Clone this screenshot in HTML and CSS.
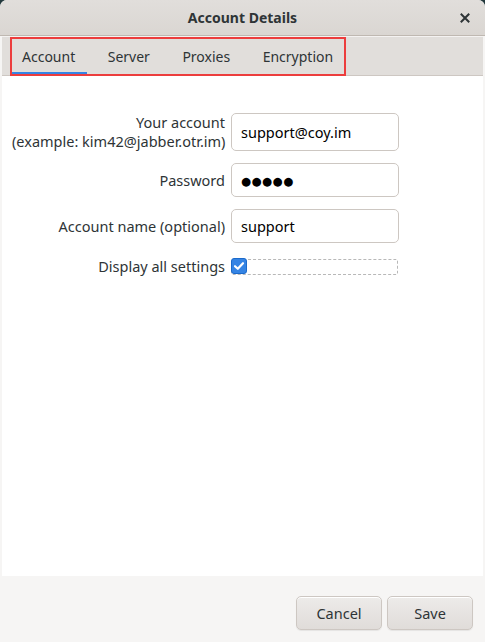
FILE: index.html
```html
<!DOCTYPE html>
<html>
<head>
<meta charset="utf-8">
<link rel="stylesheet" href="styles.css">
</head>
<body>
<div class="window">
  <header class="titlebar">
    <span class="title">Account Details</span>
    <button class="close" aria-label="Close">
      <svg width="10" height="10" viewBox="0 0 10 10"><path d="M1.5 1.5 L8.5 8.5 M8.5 1.5 L1.5 8.5" stroke="#2e3436" stroke-width="2" stroke-linecap="square"/></svg>
    </button>
  </header>
  <div class="notebook">
    <div class="tabstrip">
      <nav class="tabs">
        <span class="tab active">Account</span>
        <span class="tab">Server</span>
        <span class="tab">Proxies</span>
        <span class="tab">Encryption</span>
      </nav>
    </div>
    <main class="page">
      <div class="form">
        <label class="label two">Your account<br>(example: kim42@jabber.otr.im)</label>
        <div class="entry tall">support@coy.im</div>
        <label class="label">Password</label>
        <div class="entry dots">●●●●●</div>
        <label class="label">Account name (optional)</label>
        <div class="entry">support</div>
        <label class="label check-label">Display all settings</label>
        <div class="check-row">
          <span class="checkbox">
            <svg width="12" height="10" viewBox="0 0 12 10"><path d="M2 5.2 L4.8 7.8 L10 2.2" fill="none" stroke="#fff" stroke-width="2.2" stroke-linecap="round" stroke-linejoin="round"/></svg>
          </span>
        </div>
      </div>
    </main>
  </div>
  <footer class="actions">
    <button class="btn">Cancel</button>
    <button class="btn">Save</button>
  </footer>
</div>
</body>
</html>
```
FILE: styles.css
```css
* { box-sizing: border-box; }
html, body {
  margin: 0;
  padding: 0;
  width: 485px;
  height: 642px;
  background: #23393d;
  overflow: hidden;
}
body {
  font-family: "Noto Sans", "DejaVu Sans", sans-serif;
  font-size: 14.5px;
  color: #2e3436;
}
.window {
  width: 485px;
  height: 642px;
  display: flex;
  flex-direction: column;
  background: #f6f5f4;
  border-radius: 7px 7px 0 0;
  overflow: hidden;
}
.titlebar {
  height: 36px;
  flex: none;
  display: flex;
  align-items: center;
  justify-content: center;
  position: relative;
  background: linear-gradient(#e1dedb, #dad6d2);
  border-bottom: 1px solid #bfb8b1;
}
.title {
  font-weight: bold;
  font-size: 14px;
  color: #2e3436;
}
.close {
  position: absolute;
  right: 10px;
  top: 8px;
  width: 20px;
  height: 20px;
  border: none;
  background: none;
  padding: 0;
  display: flex;
  align-items: center;
  justify-content: center;
}
.notebook {
  flex: 1;
  display: flex;
  flex-direction: column;
  margin: 0 2px;
}
.tabstrip {
  height: 40px;
  flex: none;
  background: #e1dedb;
  border-top: 1px solid #f4f2f1;
  border-bottom: 1px solid #cdc7c2;
  padding-left: 8px;
  display: flex;
}
.tabs {
  position: relative;
  display: flex;
  gap: 8.5px;
  height: 100%;
}
.tabs::after {
  content: "";
  position: absolute;
  left: 0;
  top: 0;
  right: -1px;
  bottom: -1px;
  border: 2px solid #ec3d3d;
  pointer-events: none;
}
.tab {
  padding: 3px 12px 0 12px;
  display: flex;
  align-items: center;
  font-size: 14px;
  color: #2e3436;
  border-bottom: 3px solid transparent;
}
.tab.active {
  border-bottom-color: #3584e4;
}
.page {
  flex: 1;
  background: #ffffff;
  padding: 37px 0 0 10px;
}
.form {
  display: grid;
  grid-template-columns: 213px 168px;
  column-gap: 6px;
  row-gap: 12px;
  align-items: center;
}
.label {
  text-align: right;
  font-size: 14.5px;
  line-height: 19px;
  color: #2e3436;
  white-space: nowrap;
}
.entry {
  height: 34px;
  border: 1px solid #cdc7c2;
  border-radius: 5px;
  background: #fff;
  padding: 0 9px;
  display: flex;
  align-items: center;
  font-size: 14.5px;
  color: #000;
}
.entry.tall {
  height: 38px;
}
.entry.dots {
  font-size: 11.5px;
  letter-spacing: 0.5px;
}
.check-label {
  margin-top: 2px;
}
.check-row {
  height: 16px;
  margin-top: 2px;
  border: 1px dashed #b8b8b8;
  border-radius: 2px;
  display: flex;
  align-items: center;
  width: 167px;
}
.checkbox {
  width: 16px;
  height: 16px;
  margin: -1px 0 0 -1px;
  background: #3584e4;
  border: 1px solid #1b6acb;
  border-radius: 3px;
  display: flex;
  align-items: center;
  justify-content: center;
}
.actions {
  height: 66px;
  flex: none;
  display: flex;
  justify-content: flex-end;
  align-items: flex-start;
  gap: 5px;
  padding: 20px 12px 0 0;
  background: #f6f5f4;
}
.btn {
  width: 86px;
  height: 34px;
  border: 1px solid #cdc7c2;
  border-radius: 5px;
  background: linear-gradient(#edebe9, #e0dcd9);
  font-family: "Noto Sans", "DejaVu Sans", sans-serif;
  font-size: 14.5px;
  color: #2e3436;
  box-shadow: inset 0 1px #fff, 0 1px 1px rgba(0,0,0,0.07);
}
```
